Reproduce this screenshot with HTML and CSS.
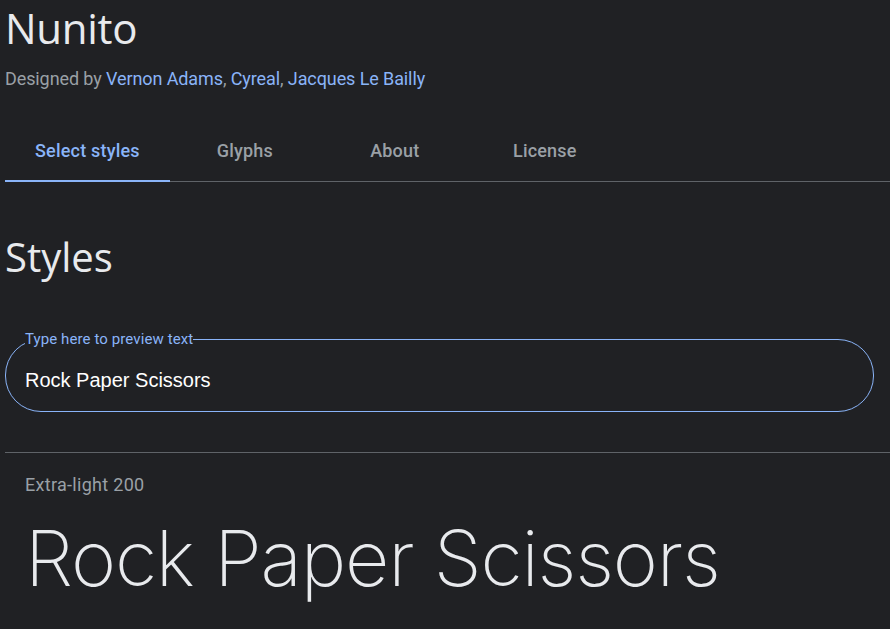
FILE: index.html
```html
<!DOCTYPE html>
<html lang="en">
<head>
<meta charset="utf-8">
<title>Nunito</title>
<link rel="stylesheet" href="styles.css">
</head>
<body>
<div class="page">
  <header class="header">
    <h1 class="title">Nunito</h1>
    <p class="designers">Designed by <a href="#">Vernon Adams</a>, <a href="#">Cyreal</a>, <a href="#">Jacques Le Bailly</a></p>
  </header>
  <nav class="tabs">
    <a class="tab tab-active" href="#">Select styles</a>
    <a class="tab" href="#">Glyphs</a>
    <a class="tab" href="#">About</a>
    <a class="tab" href="#">License</a>
  </nav>
  <section class="styles">
    <h2 class="styles-title">Styles</h2>
    <fieldset class="preview">
      <legend class="preview-label">Type here to preview text</legend>
      <input class="preview-input" type="text" value="Rock Paper Scissors">
    </fieldset>
    <div class="style-row">
      <div class="style-name">Extra-light 200</div>
      <div class="style-sample">Rock Paper Scissors</div>
    </div>
  </section>
</div>
</body>
</html>
```
FILE: styles.css
```css
html, body {
  margin: 0;
  padding: 0;
  background: #202124;
  height: 100%;
  overflow: hidden;
}
body {
  font-family: Roboto, "Liberation Sans", Arial, sans-serif;
  color: #e8eaed;
}
.page {
  padding-left: 5px;
}
.header {
  padding-top: 0;
}
.title {
  margin: 0;
  font-family: "Open Sans", Roboto, sans-serif;
  font-weight: 400;
  font-size: 42px;
  line-height: 56px;
  color: #e8eaed;
  letter-spacing: -0.3px;
}
.designers {
  margin: 11px 0 0;
  font-size: 18px;
  line-height: 24px;
  letter-spacing: -0.1px;
  color: #9aa0a6;
}
.designers a {
  color: #8ab4f8;
  text-decoration: none;
}
.tabs {
  display: flex;
  margin-top: 29px;
  border-bottom: 1px solid #5f6368;
}
.tab {
  min-width: 150px;
  box-sizing: border-box;
  padding: 0 30px;
  height: 62px;
  display: flex;
  align-items: center;
  justify-content: center;
  font-size: 18px;
  font-weight: 500;
  letter-spacing: 0.2px;
  color: #9aa0a6;
  text-decoration: none;
  border-bottom: 2px solid transparent;
  margin-bottom: -1px;
}
.tab-active {
  color: #8ab4f8;
  border-bottom-color: #8ab4f8;
}
.styles-title {
  margin: 51px 0 0;
  font-family: "Open Sans", Roboto, sans-serif;
  font-weight: 400;
  font-size: 40px;
  line-height: 48px;
  color: #e8eaed;
}
.preview {
  margin: 50px 16px 0 0;
  padding: 0 19px 0;
  border: 1px solid #8ab4f8;
  border-radius: 36px;
  height: 81px;
  box-sizing: border-box;
  min-width: 0;
}
.preview-label {
  padding: 0;
  font-size: 15px;
  line-height: 16px;
  letter-spacing: 0.1px;
  color: #8ab4f8;
}
.preview-input {
  display: block;
  width: 100%;
  margin-top: 21px;
  padding: 0;
  border: 0;
  outline: none;
  background: transparent;
  font-family: "Liberation Sans", Arial, sans-serif;
  font-size: 20px;
  line-height: 24px;
  color: #ffffff;
}
.style-row {
  margin-top: 40px;
  border-top: 1px solid #5f6368;
  padding: 20px 20px 0;
}
.style-name {
  font-size: 18px;
  line-height: 24px;
  letter-spacing: 0.3px;
  color: #9aa0a6;
}
.style-sample {
  margin-top: 13px;
  font-family: Inter, "Noto Sans", sans-serif;
  font-weight: 200;
  font-size: 77px;
  line-height: 96px;
  letter-spacing: -1.2px;
  color: #e8eaed;
  white-space: nowrap;
}
```
